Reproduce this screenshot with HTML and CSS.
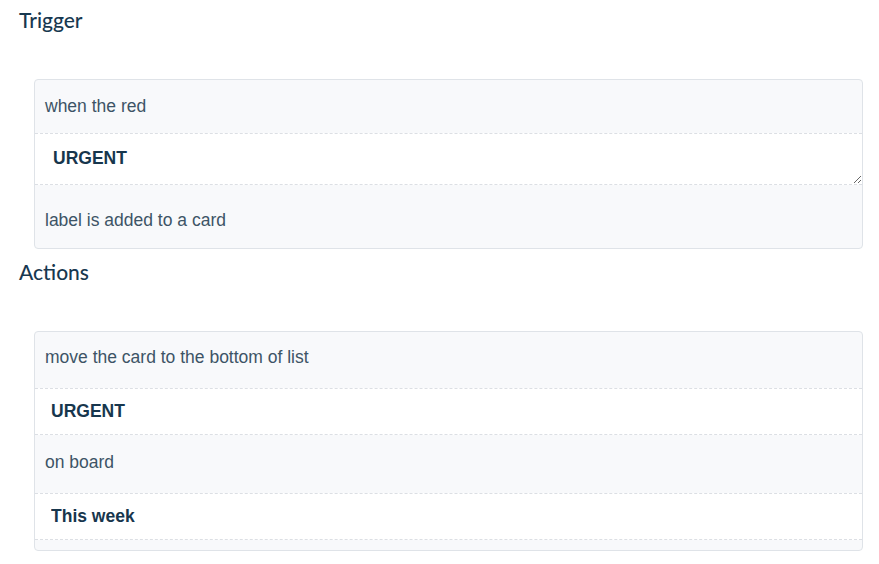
FILE: index.html
```html
<!DOCTYPE html>
<html lang="en">
<head>
<meta charset="utf-8">
<title>Rule</title>
<link rel="stylesheet" href="styles.css">
</head>
<body>
<section class="section">
  <h3 class="section-title">Trigger</h3>
  <div class="card">
    <div class="text-row first">when the red</div>
    <textarea class="field field-area" rows="1">URGENT</textarea>
    <div class="text-row after-area">label is added to a card</div>
  </div>
</section>
<section class="section">
  <h3 class="section-title section-title-next">Actions</h3>
  <div class="card card-actions">
    <div class="text-row first-action">move the card to the bottom of list</div>
    <input class="field field-input" type="text" value="URGENT">
    <div class="text-row mid-action">on board</div>
    <input class="field field-input" type="text" value="This week">
  </div>
</section>
</body>
</html>
```

FILE: styles.css
```css
html, body {
  margin: 0;
  padding: 0;
  background: #ffffff;
}

body {
  font-family: "Liberation Sans", Arial, sans-serif;
  color: #3d5466;
}

.section {
  padding: 0 16px 0 19px;
}

.section-title {
  margin: 0;
  padding-top: 8px;
  height: 79px;
  box-sizing: border-box;
  font-family: Lato, "Open Sans", sans-serif;
  font-weight: 500;
  font-size: 21px;
  line-height: 24px;
  color: #173850;
}

.section-title-next {
  padding-top: 11px;
  height: 82px;
}

.card {
  margin-left: 15px;
  background: #f8f9fb;
  border: 1px solid #dfe3e8;
  border-radius: 4px;
  display: flex;
  flex-direction: column;
}

.card-actions {
  padding-bottom: 10px;
}

.text-row {
  font-size: 17.5px;
  line-height: 20px;
  padding: 16px 10px 17px;
}

.first { padding: 16px 10px 17px; }
.after-area { padding: 25px 10px 18px; }
.first-action { padding: 15px 10px 21px; }
.mid-action { padding: 17px 10px 21px; }

.field {
  display: block;
  width: 100%;
  box-sizing: border-box;
  margin: 0;
  background: #ffffff;
  border: none;
  border-top: 1px dashed #dcdfe4;
  border-bottom: 1px dashed #dcdfe4;
  font-family: "Liberation Sans", Arial, sans-serif;
  font-weight: 700;
  font-size: 17.5px;
  color: #17364d;
  outline: none;
}

.field-area {
  height: 52px;
  padding: 14px 18px 0;
  line-height: 20px;
  resize: vertical;
}

.field-input {
  height: 47px;
  padding: 0 16px;
  line-height: 20px;
}
```
